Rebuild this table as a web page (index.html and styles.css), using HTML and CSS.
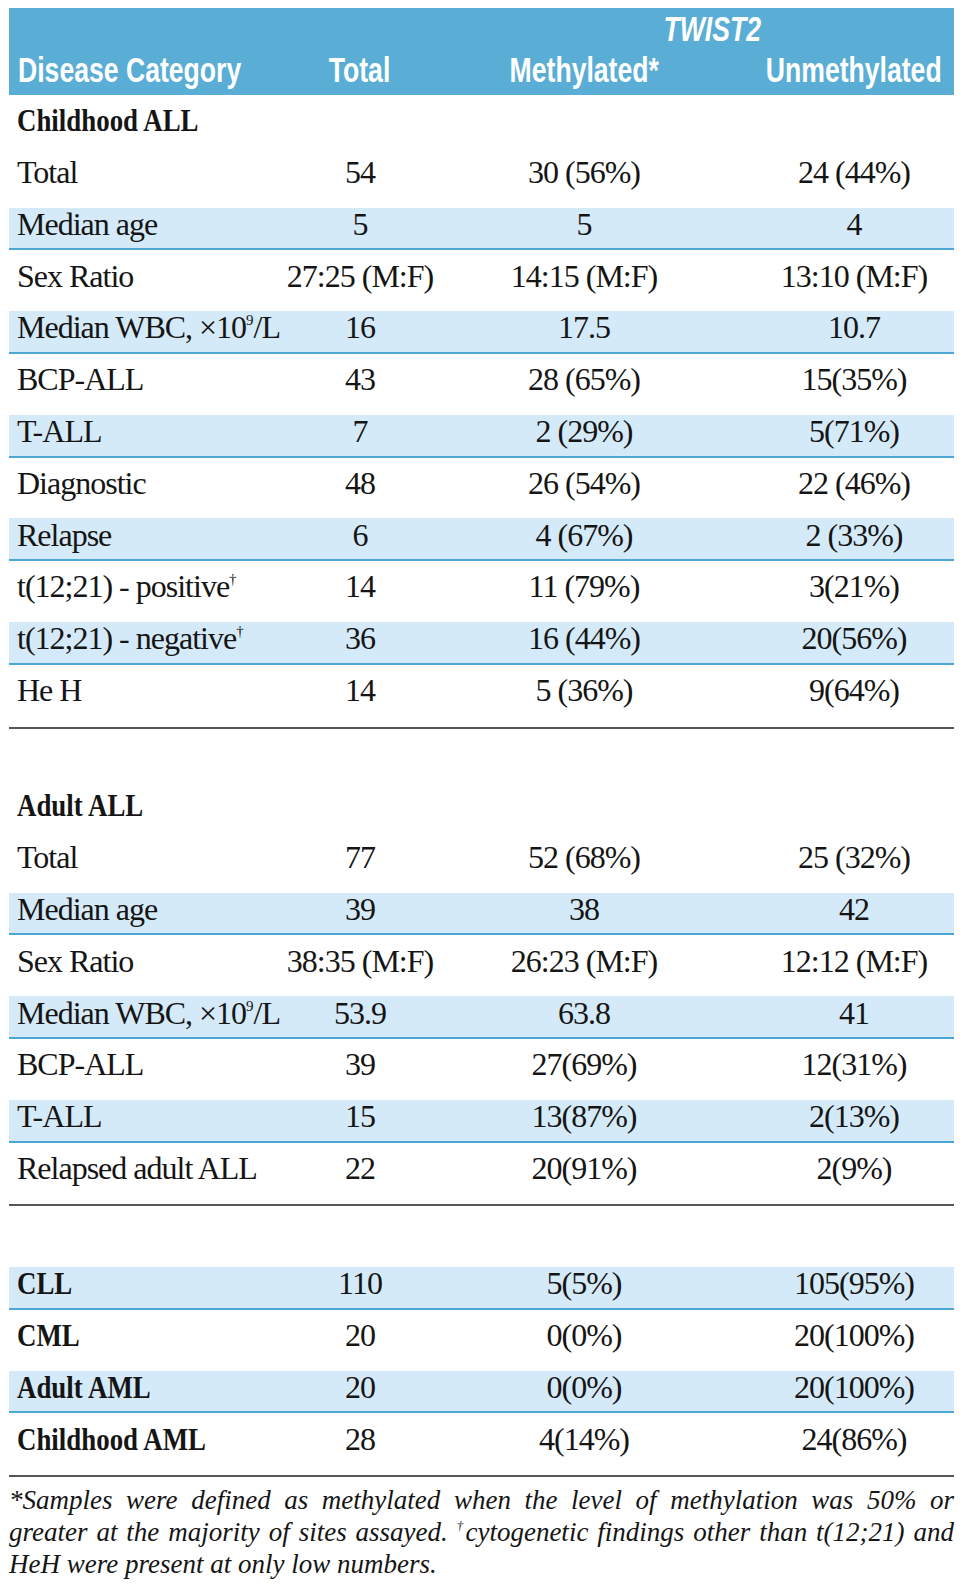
FILE: index.html
```html
<!DOCTYPE html>
<html lang="en">
<head>
<meta charset="utf-8">
<title>TWIST2 methylation by disease category</title>
<link rel="stylesheet" href="styles.css">
</head>
<body>
<div class="table">
  <div class="thead">
    <div class="twist-row"><span class="hx twist">TWIST2</span></div>
    <div class="hrow">
      <div class="hc first"><span class="hx">Disease Category</span></div>
      <div class="hc"><span class="hx">Total</span></div>
      <div class="hc"><span class="hx">Methylated*</span></div>
      <div class="hc"><span class="hx">Unmethylated</span></div>
    </div>
  </div>

  <div class="group">
    <div class="row"><div class="label strong"><span class="cx">Childhood ALL</span></div></div>
    <div class="row"><div class="label">Total</div><div class="num">54</div><div class="num">30 (56%)</div><div class="num">24 (44%)</div></div>
    <div class="row shade"><div class="label">Median age</div><div class="num">5</div><div class="num">5</div><div class="num">4</div></div>
    <div class="row"><div class="label">Sex Ratio</div><div class="num">27:25 (M:F)</div><div class="num">14:15 (M:F)</div><div class="num">13:10 (M:F)</div></div>
    <div class="row shade"><div class="label">Median WBC, ×10<sup class="sup">9</sup>/L</div><div class="num">16</div><div class="num">17.5</div><div class="num">10.7</div></div>
    <div class="row"><div class="label">BCP-ALL</div><div class="num">43</div><div class="num">28 (65%)</div><div class="num">15(35%)</div></div>
    <div class="row shade"><div class="label">T-ALL</div><div class="num">7</div><div class="num">2 (29%)</div><div class="num">5(71%)</div></div>
    <div class="row"><div class="label">Diagnostic</div><div class="num">48</div><div class="num">26 (54%)</div><div class="num">22 (46%)</div></div>
    <div class="row shade"><div class="label">Relapse</div><div class="num">6</div><div class="num">4 (67%)</div><div class="num">2 (33%)</div></div>
    <div class="row"><div class="label">t(12;21) - positive<sup class="sup">†</sup></div><div class="num">14</div><div class="num">11 (79%)</div><div class="num">3(21%)</div></div>
    <div class="row shade"><div class="label">t(12;21) - negative<sup class="sup">†</sup></div><div class="num">36</div><div class="num">16 (44%)</div><div class="num">20(56%)</div></div>
    <div class="row"><div class="label">He H</div><div class="num">14</div><div class="num">5 (36%)</div><div class="num">9(64%)</div></div>
  </div>

  <div class="group">
    <div class="row"><div class="label strong"><span class="cx">Adult ALL</span></div></div>
    <div class="row"><div class="label">Total</div><div class="num">77</div><div class="num">52 (68%)</div><div class="num">25 (32%)</div></div>
    <div class="row shade"><div class="label">Median age</div><div class="num">39</div><div class="num">38</div><div class="num">42</div></div>
    <div class="row"><div class="label">Sex Ratio</div><div class="num">38:35 (M:F)</div><div class="num">26:23 (M:F)</div><div class="num">12:12 (M:F)</div></div>
    <div class="row shade"><div class="label">Median WBC, ×10<sup class="sup">9</sup>/L</div><div class="num">53.9</div><div class="num">63.8</div><div class="num">41</div></div>
    <div class="row"><div class="label">BCP-ALL</div><div class="num">39</div><div class="num">27(69%)</div><div class="num">12(31%)</div></div>
    <div class="row shade"><div class="label">T-ALL</div><div class="num">15</div><div class="num">13(87%)</div><div class="num">2(13%)</div></div>
    <div class="row"><div class="label">Relapsed adult ALL</div><div class="num">22</div><div class="num">20(91%)</div><div class="num">2(9%)</div></div>
  </div>

  <div class="group">
    <div class="row shade"><div class="label strong"><span class="cx">CLL</span></div><div class="num">110</div><div class="num">5(5%)</div><div class="num">105(95%)</div></div>
    <div class="row"><div class="label strong"><span class="cx">CML</span></div><div class="num">20</div><div class="num">0(0%)</div><div class="num">20(100%)</div></div>
    <div class="row shade"><div class="label strong"><span class="cx">Adult AML</span></div><div class="num">20</div><div class="num">0(0%)</div><div class="num">20(100%)</div></div>
    <div class="row"><div class="label strong"><span class="cx">Childhood AML</span></div><div class="num">28</div><div class="num">4(14%)</div><div class="num">24(86%)</div></div>
  </div>

  <p class="footnote">
    <span class="fn-line">*Samples were defined as methylated when the level of methylation was 50% or</span>
    <span class="fn-line">greater at the majority of sites assayed. <sup class="fn-sup">†</sup>cytogenetic findings other than t(12;21) and</span>
    <span class="fn-line last">HeH were present at only low numbers.</span>
  </p>
</div>
</body>
</html>
```

FILE: styles.css
```css
* {
  box-sizing: border-box;
}

body {
  margin: 0;
  background: #ffffff;
  color: #151515;
  font-family: "Liberation Serif", "Times New Roman", serif;
}

.table {
  width: 945px;
  margin: 8px 0 0 9px;
}

/* Header */
.thead {
  height: 87px;
  padding-bottom: 5px;
  background: #5aaed5;
  color: #ffffff;
  font-family: "Liberation Sans", Arial, sans-serif;
  font-weight: bold;
  font-size: 35px;
  line-height: 1;
}

.hx {
  display: inline-block;
  white-space: nowrap;
  transform: scaleX(0.76);
  transform-origin: center center;
}

.twist-row {
  height: 40px;
  display: flex;
  align-items: center;
  justify-content: center;
  padding-left: 461px;
}

.twist {
  font-style: italic;
}

.hrow {
  height: 42px;
  display: grid;
  grid-template-columns: 297px 108px 340px 200px;
  align-items: center;
}

.hc {
  display: flex;
  justify-content: center;
  white-space: nowrap;
}

.hc.first {
  justify-content: flex-start;
  padding-left: 9px;
}

.hc.first .hx {
  transform-origin: left center;
}

/* Body groups */
.group {
  padding-bottom: 10px;
  border-bottom: 2px solid #565656;
}

.group + .group {
  margin-top: 51.5px;
}

.row {
  height: 51.8px;
  padding-top: 2px;
  border-bottom: 2px solid transparent;
  display: grid;
  grid-template-columns: 297px 108px 340px 200px;
  align-items: center;
  font-size: 32px;
  letter-spacing: -1px;
  line-height: 1.1;
}

.row.shade {
  background: linear-gradient(to bottom, transparent 9px, #d5eaf8 9px);
  border-bottom-color: #4ba8d3;
}

.label {
  padding-left: 8px;
  white-space: nowrap;
}

.label.strong {
  font-weight: bold;
  letter-spacing: 0;
}

.cx {
  display: inline-block;
  transform: scaleX(0.84);
  transform-origin: left center;
}

.num {
  display: flex;
  justify-content: center;
  white-space: nowrap;
}

.sup {
  font-size: 15px;
  vertical-align: 13px;
  line-height: 0;
  letter-spacing: 0;
}

/* Footnote */
.footnote {
  margin: 7px 0 0;
  font-style: italic;
  font-size: 27px;
  line-height: 32px;
}

.fn-line {
  display: block;
  text-align: justify;
  text-align-last: justify;
}

.fn-line.last {
  text-align-last: left;
}

.fn-sup {
  font-size: 13px;
  vertical-align: 11px;
  line-height: 0;
}
```
